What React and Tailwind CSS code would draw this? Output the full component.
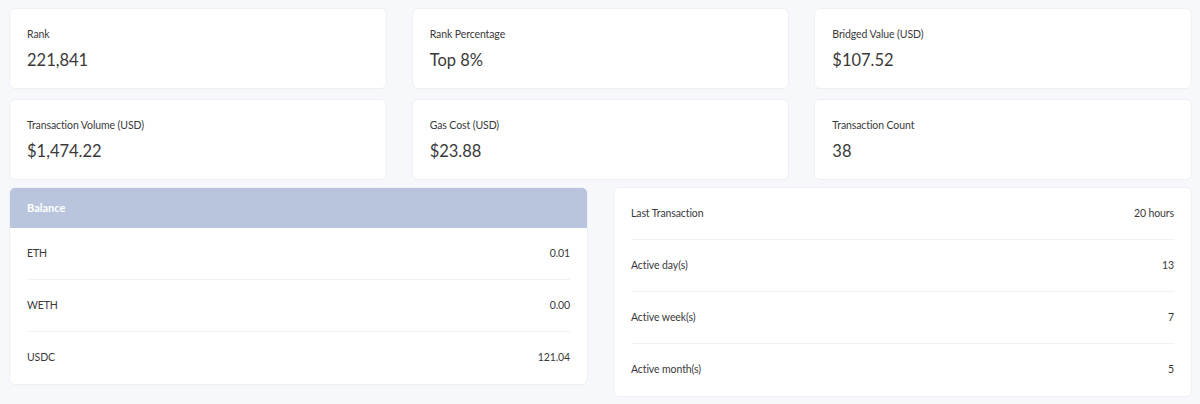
import React from "react";

const stats = [
  { label: "Rank", value: "221,841" },
  { label: "Rank Percentage", value: "Top 8%" },
  { label: "Bridged Value (USD)", value: "$107.52" },
  { label: "Transaction Volume (USD)", value: "$1,474.22" },
  { label: "Gas Cost (USD)", value: "$23.88" },
  { label: "Transaction Count", value: "38" },
];

const balances = [
  { token: "ETH", amount: "0.01" },
  { token: "WETH", amount: "0.00" },
  { token: "USDC", amount: "121.04" },
];

const activity = [
  { label: "Last Transaction", value: "20 hours" },
  { label: "Active day(s)", value: "13" },
  { label: "Active week(s)", value: "7" },
  { label: "Active month(s)", value: "5" },
];

export default function App() {
  return (
    <div
      className="min-h-[404px] bg-[#f7f8fc] pl-[9px] pr-[8px] pt-[8px] text-[#3a3a3a]"
      style={{ fontFamily: 'Lato, "Noto Sans", sans-serif' }}
    >
      {/* stat cards */}
      <div className="grid grid-cols-3 gap-x-[25px] gap-y-[10px]">
        {stats.map((s) => (
          <div
            key={s.label}
            className="h-[81px] rounded-md border border-[#eef0f4] bg-white px-[17px] pt-[17px]"
          >
            <p className="text-[10.5px] leading-4 tracking-[-0.1px]">{s.label}</p>
            <p className="mt-[6px] text-[16.5px] leading-6">{s.value}</p>
          </div>
        ))}
      </div>

      <div className="mt-[7px] grid grid-cols-2 items-start gap-x-[25px]">
        {/* Balance */}
        <div className="overflow-hidden rounded-md border border-[#eef0f4] bg-white">
          <div className="flex h-[40px] items-center bg-[#b8c5dc] px-[17px] text-[11px] font-bold text-white">
            Balance
          </div>
          <div className="px-[17px]">
            {balances.map((b, i) => (
              <div
                key={b.token}
                className={`flex h-[52px] items-center justify-between text-[10.5px] tracking-[-0.1px] ${
                  i < balances.length - 1 ? "border-b border-[#f0f1f5]" : ""
                }`}
              >
                <span>{b.token}</span>
                <span>{b.amount}</span>
              </div>
            ))}
          </div>
        </div>

        {/* Activity */}
        <div className="rounded-md border border-[#eef0f4] bg-white px-[17px]">
          {activity.map((a, i) => (
            <div
              key={a.label}
              className={`flex h-[52px] items-center justify-between text-[10.5px] tracking-[-0.1px] ${
                i < activity.length - 1 ? "border-b border-[#f0f1f5]" : ""
              }`}
            >
              <span>{a.label}</span>
              <span>{a.value}</span>
            </div>
          ))}
        </div>
      </div>
    </div>
  );
}
